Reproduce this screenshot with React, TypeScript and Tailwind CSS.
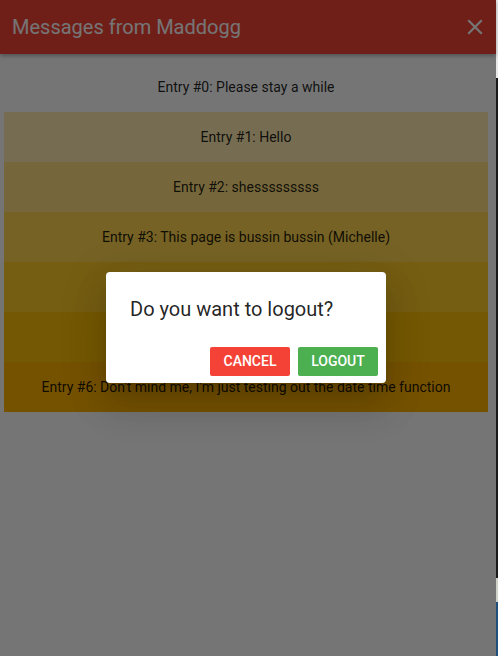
import React from "react";

const entries = [
  { text: "Entry #0: Please stay a while", bg: "bg-transparent" },
  { text: "Entry #1: Hello", bg: "bg-[#ffecb3]" },
  { text: "Entry #2: shesssssssss", bg: "bg-[#ffe082]" },
  { text: "Entry #3: This page is bussin bussin (Michelle)", bg: "bg-[#ffd54f]" },
  { text: "Entry #4: Wassup", bg: "bg-[#ffca28]" },
  { text: "Entry #5: Testing", bg: "bg-[#ffc107]" },
  { text: "Entry #6: Don't mind me, I'm just testing out the date time function", bg: "bg-[#ffb300]" },
];

export default function App() {
  return (
    <div className="flex w-[498px] h-[656px] overflow-hidden bg-white" style={{ fontFamily: "Roboto, 'Noto Sans', sans-serif" }}>
      <div className="relative w-[496px] h-[656px] bg-white">
        <header className="relative z-10 h-[54px] bg-[#f44336] flex items-center justify-between pl-3 pr-[13px] shadow-[0_2px_4px_rgba(0,0,0,0.3)]">
          <h1 className="text-white text-[20px] leading-none">Messages from Maddogg</h1>
          <svg width="16" height="16" viewBox="0 0 16 16" className="text-white">
            <path d="M2 2 L14 14 M14 2 L2 14" stroke="currentColor" strokeWidth="2.2" strokeLinecap="square" />
          </svg>
        </header>
        <div className="pt-2 pl-1 pr-2">
          {entries.map((e) => (
            <div key={e.text} className={`h-[50px] flex items-center justify-center text-[14px] text-black/[0.87] ${e.bg}`}>
              {e.text}
            </div>
          ))}
        </div>
        <div className="absolute inset-0 z-20 bg-black/[0.54] flex items-center justify-center pr-1 pb-[2px]">
          <div className="w-[280px] h-[111px] bg-white rounded-[4px] shadow-[0_11px_15px_-7px_rgba(0,0,0,0.14),0_24px_38px_3px_rgba(0,0,0,0.1),0_9px_46px_8px_rgba(0,0,0,0.08)] flex flex-col">
            <div className="pl-6 pt-[24px] text-[20px] leading-[26px] text-black/[0.87]">Do you want to logout?</div>
            <div className="mt-auto flex justify-end gap-2 pr-2 pb-[7px]">
              <button className="w-[80px] h-[29px] rounded-[2px] bg-[#f44336] text-white text-[14px] font-medium uppercase">Cancel</button>
              <button className="w-[80px] h-[29px] rounded-[2px] bg-[#4caf50] text-white text-[14px] font-medium uppercase">Logout</button>
            </div>
          </div>
        </div>
      </div>
      <div className="w-[2px] h-[656px] flex flex-col">
        <div className="h-[78px] bg-[#e8e8e8]" />
        <div className="flex-1 bg-[#1a1a1a]" />
        <div className="h-[24px] bg-[#cfd2c8]" />
        <div className="h-[54px] bg-[#1f4f7a]" />
      </div>
    </div>
  );
}
